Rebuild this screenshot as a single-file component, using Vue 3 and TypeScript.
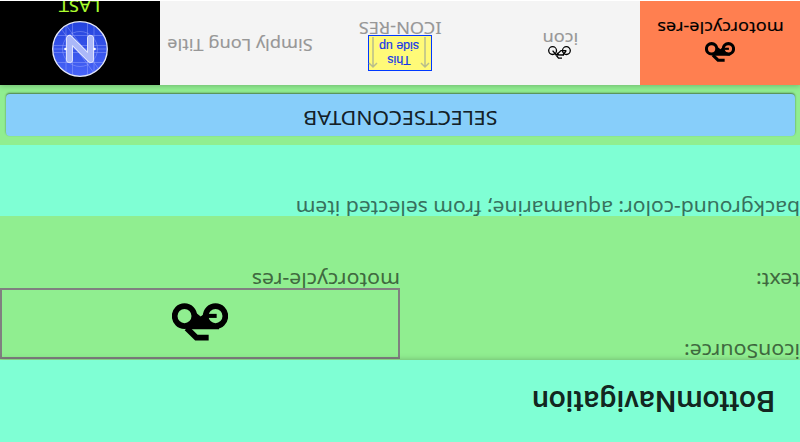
<script setup lang="ts">
const tabs = [
  { title: 'motorcycle-res', kind: 'moto', cls: 'coral' },
  { title: 'icon', kind: 'bike', cls: 'second' },
  { title: 'ICON-RES', kind: 'sign', cls: 'third' },
  { title: 'Simply Long Title', kind: 'none', cls: 'fourth' },
  { title: 'LAST', kind: 'logo', cls: 'last' },
]
</script>

<template>
  <div class="screen">
    <header class="bar">BottomNavigation</header>
    <main class="content">
      <div class="row first">
        <span class="label source">iconSource:</span>
        <div class="preview">
          <svg class="moto-big" viewBox="0 0 168 112" preserveAspectRatio="none">
            <g fill="none" stroke="#000" stroke-width="17">
              <circle cx="37.5" cy="73.5" r="29.5" /><circle cx="130.5" cy="73.5" r="29.5" />
              <path d="M58 10H95L124 38" />
              <path d="M34 74H60" stroke-width="12" />
            </g>
            <path d="M27 35H126L128 45L107 54Q97 62 97 84L82 72L66 84Q68 62 48 54L26 46Z" />
          </svg>
        </div>
      </div>
      <div class="row">
        <span class="label text">text:</span>
        <span class="label res">motorcycle-res</span>
      </div>
      <div class="row aqua"><span class="label bg">background-color: aquamarine; from selected item</span></div>
      <div class="actions"><button class="btn"><span class="btn-text">SELECTSECONDTAB</span></button></div>
    </main>
    <nav class="tabs">
      <div v-for="t in tabs" :key="t.title" class="tab" :class="t.cls">
        <svg v-if="t.kind === 'moto'" class="moto-small" viewBox="0 0 168 112" preserveAspectRatio="none">
          <g fill="none" stroke="#000" stroke-width="17">
            <circle cx="37" cy="74" r="29" /><circle cx="131" cy="74" r="29" />
            <path d="M58 10H95L124 38" />
            <path d="M34 74H60" stroke-width="12" />
          </g>
          <path d="M27 35H126L128 45L107 54Q97 62 97 84L82 72L66 84Q68 62 48 54L26 46Z" />
        </svg>
        <svg v-else-if="t.kind === 'bike'" class="bike" viewBox="0 0 23 13">
          <g fill="none" stroke="#000" stroke-width="1.3">
            <circle cx="4.6" cy="8.4" r="3.9" /><circle cx="18.4" cy="8.4" r="3.9" />
            <path d="M4.6 8.4H10L14.5 4.2L8 4L5 8M18.4 8.4L14.3 3.5M7 3.8H12L14 6M9 .8H12.5L14.5 3.5" />
          </g>
        </svg>
        <div v-else-if="t.kind === 'sign'" class="sign">
          <svg viewBox="0 0 10 33"><path d="M5 32V2M1 6L5 2L9 6" /></svg>
          <div class="sign-text">This<br />side up</div>
          <svg viewBox="0 0 10 33"><path d="M5 32V2M1 6L5 2L9 6" /></svg>
        </div>
        <svg v-else-if="t.kind === 'logo'" class="logo" viewBox="0 0 56 56">
          <defs>
            <linearGradient id="disc" x1="0" y1="0" x2="0" y2="1">
              <stop offset="0" stop-color="#4864f8" /><stop offset="1" stop-color="#2443dc" />
            </linearGradient>
            <clipPath id="round"><circle cx="28" cy="28" r="27" /></clipPath>
          </defs>
          <circle cx="28" cy="28" r="27.3" fill="url(#disc)" stroke="#e4e8fa" stroke-width="1.3" />
          <g clip-path="url(#round)" fill="none" stroke="#a8b5ff" stroke-opacity=".5" stroke-width=".8">
            <path d="M14 0V56M20.5 0V56M35.5 0V56M42 0V56M0 14.5H56M0 41.5H56M0 24.5H56M0 28H56M0 31.5H56M7 5L45 56M11 0L49 51" />
            <circle cx="28" cy="28" r="17.5" />
          </g>
          <path d="M17.5 38.5V17.5L38.5 38.5V17.5" fill="none" stroke="#e5e9ff" stroke-width="7" stroke-linecap="round" stroke-linejoin="round" />
          <path d="M17.5 38.5V17.5L38.5 38.5V17.5" fill="none" stroke="#abb8f8" stroke-width="5.3" stroke-linecap="round" stroke-linejoin="round" />
          <circle cx="13.5" cy="28" r="1.3" fill="#fff" /><circle cx="42.5" cy="28" r="1.3" fill="#fff" />
        </svg>
        <span class="title">{{ t.title }}</span>
      </div>
    </nav>
  </div>
</template>

<style>
body { margin: 0; overflow: hidden; }
</style>
<style scoped>
* { box-sizing: border-box; }
.screen { width: 800px; height: 442px; display: flex; flex-direction: column; transform: rotate(180deg); background: #90ee90; overflow: hidden; font-family: "Noto Sans", sans-serif; }
.bar { height: 82px; flex: none; padding-left: 25px; background: #7fffd4; font: 500 30px/82px Roboto, sans-serif; color: rgba(0,0,0,.87); box-shadow: 0 0 6px rgba(0,0,0,.25); z-index: 1; }
.content { flex: none; height: 275px; }
.row { height: 72px; display: grid; grid-template-columns: 1fr 1fr; align-items: start; }
.row.aqua { grid-template-columns: 1fr; background: #7fffd4; height: 71px; }
.label { font-size: 21px; line-height: 14px; color: rgba(0,0,0,.56); white-space: nowrap; transform: scale(1.016, .92); transform-origin: 0 15px; -webkit-text-stroke: .15px rgba(0,0,0,.5); }
.row.first .label { padding-top: 1px; }
.label.bg { transform: scale(1.005, .92); }
.preview { height: 71px; margin-top: 1px; border: 2px solid #808080; display: flex; align-items: center; justify-content: center; }
.moto-big { width: 56px; height: 38px; margin-top: 2px; }
.actions { height: 60px; padding: 9px 6px 9px 5px; }
.btn { display: block; width: 100%; height: 42px; border: 0; border-radius: 4px; background: #87cefa; box-shadow: 0 1px 2px rgba(0,0,0,.5); font: 21px/34px "Noto Sans", sans-serif; color: rgba(0,0,0,.87); padding: 0 0 8px; }
.btn-text { display: block; transform: scale(1.015, .92); transform-origin: 50% 25px; -webkit-text-stroke: .15px rgba(0,0,0,.8); }
.tabs { height: 85px; flex: none; display: grid; grid-template-columns: repeat(5, 160px); border-bottom: 1px solid #fff; box-shadow: 0 0 6px rgba(0,0,0,.3); }
.tab { background: #f4f4f4; display: flex; flex-direction: column; align-items: center; overflow: hidden; height: 84px; color: #979797; font-size: 18px; line-height: 24px; white-space: nowrap; }
.tab svg, .title { flex: none; }
.title { transform: scale(1.01, .93); transform-origin: 50% 19px; -webkit-text-stroke: .15px currentColor; }
.coral { background: #ff7f50; color: #000; padding-top: 23px; }
.moto-small { width: 30px; height: 20px; margin-bottom: 1px; }
.second { padding-top: 26px; }
.bike { width: 23px; height: 13px; margin-bottom: -6px; }
.third { padding-top: 14px; }
.sign { width: 64px; height: 36px; flex: none; border: 1px solid #0038ff; background: #fffa78; display: flex; justify-content: space-between; align-items: center; font: 12.4px/14px "Liberation Sans", sans-serif; color: #1537ea; text-align: center; margin-bottom: -6px; }
.sign-text { padding-bottom: 1px; white-space: nowrap; -webkit-text-stroke: .2px #1537ea; }
.tab .sign svg { width: 10px; height: 33px; margin: 0 1px; fill: none; stroke: #b8bd8c; stroke-width: 1.5; }
.fourth { justify-content: center; padding-bottom: 7px; }
.last { background: #000; color: #adff2f; padding-top: 8px; }
.logo { width: 56px; height: 56px; margin-bottom: 1.5px; }
</style>
